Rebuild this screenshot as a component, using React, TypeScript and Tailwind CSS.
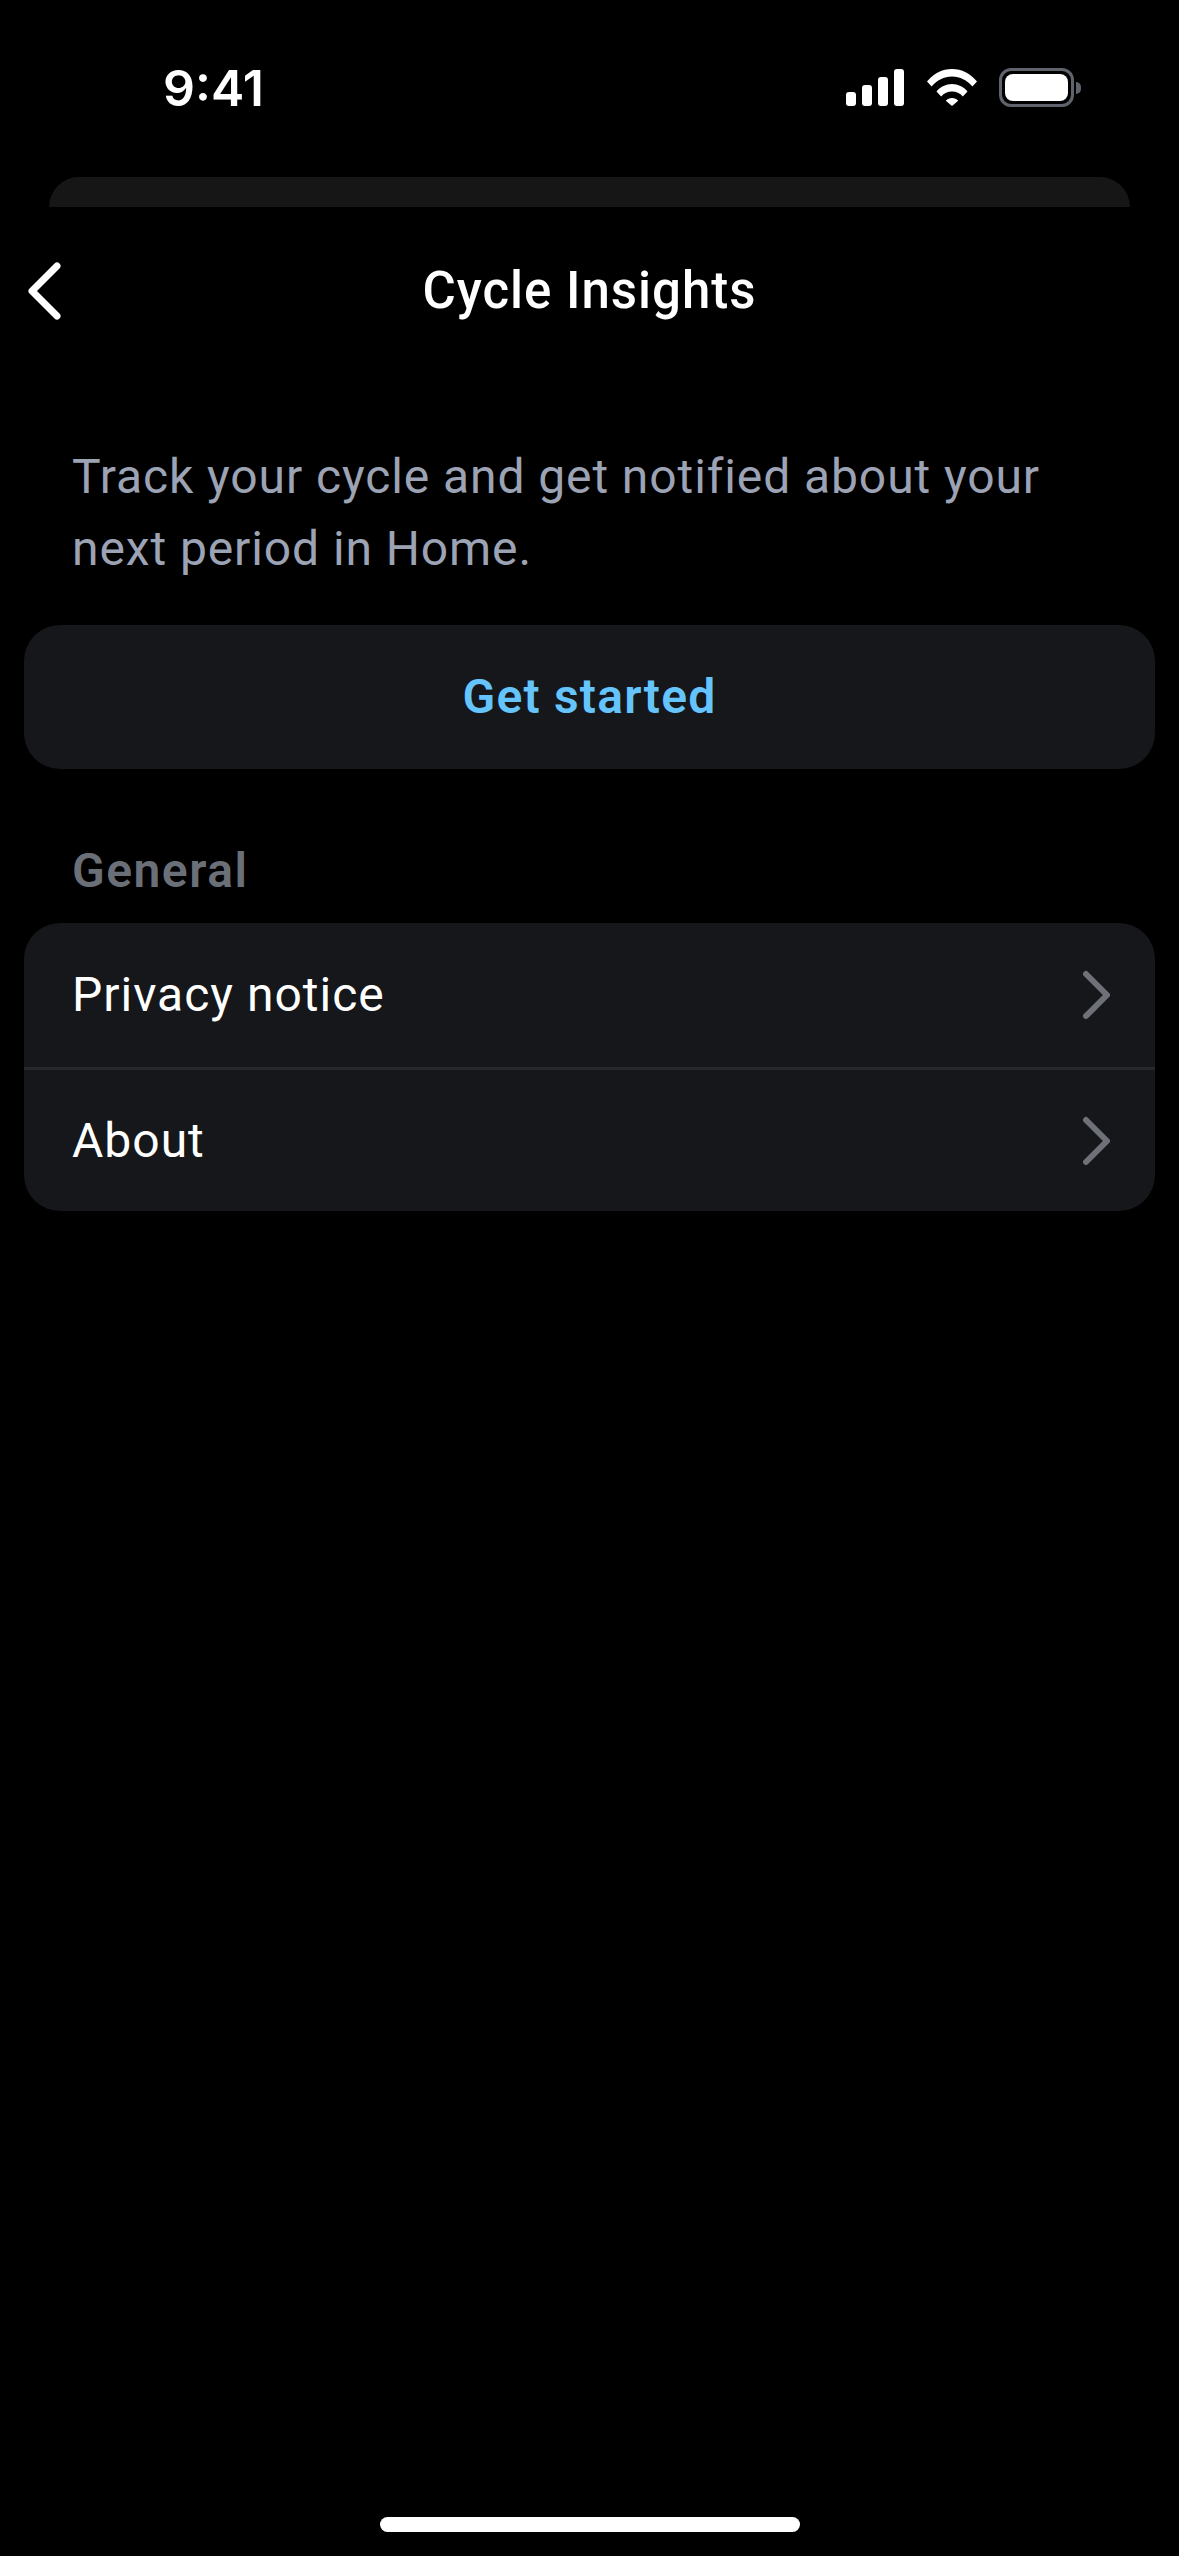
import React from "react";

function StatusIcons() {
  return (
    <div className="flex items-center">
      {/* Signal */}
      <svg width="58" height="37" viewBox="0 0 58 37" fill="#fff">
        <rect x="0" y="23" width="10" height="14" rx="3" />
        <rect x="16" y="16" width="10" height="21" rx="3" />
        <rect x="32" y="8" width="10" height="29" rx="3" />
        <rect x="48" y="0" width="10" height="37" rx="3" />
      </svg>
      {/* Wifi */}
      <svg className="ml-[23px]" width="50" height="37" viewBox="0 0 50 37" fill="#fff">
        <path d="M0 12.5C6.5 4.6 15.3 0 25 0s18.500 4.600 25 12.500l-4.600 5C40 11.300 33 7.500 25 7.500S10 11.300 4.600 17.500z" />
        <path d="M9.500 22.500C13.400 17.800 19 15 25 15s11.600 2.800 15.500 7.500l-4.700 5C33 24.300 29.200 22.500 25 22.500s-8 1.800-10.800 5z" />
        <path d="M18.800 31.700C20.400 29.900 22.600 29 25 29s4.600.9 6.200 2.700L25 37z" />
      </svg>
      {/* Battery */}
      <div className="ml-[22px] flex items-center">
        <div className="flex h-[39px] w-[75px] items-center justify-center rounded-[12px] border-[3px] border-[#5f636b]">
          <div className="h-[27px] w-[63px] rounded-[8px] bg-white" />
        </div>
        <div className="ml-[2px] h-[12px] w-[5px] rounded-r-full bg-[#5f636b]" />
      </div>
    </div>
  );
}

function SettingsRow({ label, height }: { label: string; height: string }) {
  return (
    <div className={`flex items-center justify-between pl-[48px] pr-[45px] ${height}`}>
      <span className="text-[48px] tracking-[1px] text-white">{label}</span>
      <svg width="27" height="50" viewBox="0 0 27 50" fill="none" stroke="#6e7178" strokeWidth="6" strokeLinecap="round" strokeLinejoin="round">
        <path d="M3 4l21 21L3 46" />
      </svg>
    </div>
  );
}

export default function App() {
  return (
    <div className="flex h-[2556px] w-[1179px] flex-col overflow-hidden bg-black font-['Roboto',sans-serif]">
      {/* Status bar */}
      <div className="flex h-[177px] items-start justify-between pl-[163px] pr-[98px] pt-[68px]">
        <span className="font-['Inter',sans-serif] text-[50px] font-semibold leading-[40px] text-white">9:41</span>
        <StatusIcons />
      </div>

      {/* Edge of the sheet underneath */}
      <div className="mx-[49px] h-[30px] rounded-t-[30px] bg-[#161616]" />

      {/* Navigation header */}
      <header className="relative flex h-[168px] items-center justify-center">
        <svg className="absolute left-[26px] top-[53px]" width="38" height="62" viewBox="0 0 38 62" fill="none" stroke="#fff" strokeWidth="7" strokeLinecap="round" strokeLinejoin="round">
          <path d="M31 6L6 31l25 25" />
        </svg>
        <h1 className="text-[51px] font-medium tracking-[1px] text-white">Cycle Insights</h1>
      </header>

      <main className="px-[24px]">
        <p className="px-[48px] pt-[66px] text-[48px] leading-[72px] tracking-[0.9px] text-[#9ca3b4]">
          Track your cycle and get notified about your next period in Home.
        </p>

        <button className="mt-[40px] flex h-[144px] w-full items-center justify-center rounded-[36px] bg-[#16171b] text-[48px] font-semibold tracking-[1.2px] text-[#64c4fb]">
          Get started
        </button>

        <h2 className="mt-[67px] px-[48px] text-[48px] font-semibold leading-[70px] tracking-[1.5px] text-[#6b7078]">General</h2>

        <div className="mt-[17px] rounded-[36px] bg-[#16171b]">
          <SettingsRow label="Privacy notice" height="h-[144px]" />
          <div className="h-[3px] bg-[#26282c]" />
          <SettingsRow label="About" height="h-[141px]" />
        </div>
      </main>

      {/* Home indicator */}
      <div className="mt-auto flex justify-center pb-[24px]">
        <div className="h-[15px] w-[420px] rounded-full bg-white" />
      </div>
    </div>
  );
}
